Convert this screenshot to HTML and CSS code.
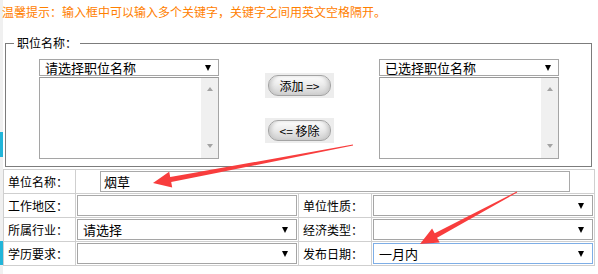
FILE: index.html
```html
<!DOCTYPE html>
<html lang="zh-CN">
<head>
  <meta charset="UTF-8">
  <meta name="viewport" content="width=device-width, initial-scale=1.0">
  <title>职位搜索</title>
  <link rel="stylesheet" href="styles.css">
</head>
<body>
  <p class="tip">温馨提示：输入框中可以输入多个关键字，关键字之间用英文空格隔开。</p>

  <fieldset class="job-box">
    <legend>职位名称：</legend>
    <div class="picker">
      <div class="pick-col">
        <div class="select"><span>请选择职位名称</span><i class="caret"></i></div>
        <div class="listbox">
          <div class="scroll"><i class="up"></i><i class="down"></i></div>
        </div>
      </div>
      <div class="pick-btns">
        <div class="btn-wrap"><button type="button">添加 =&gt;</button></div>
        <div class="btn-wrap"><button type="button">&lt;= 移除</button></div>
      </div>
      <div class="pick-col right">
        <div class="select"><span>已选择职位名称</span><i class="caret"></i></div>
        <div class="listbox">
          <div class="scroll"><i class="up"></i><i class="down"></i></div>
        </div>
      </div>
    </div>
  </fieldset>

  <table class="form">
    <colgroup>
      <col class="c-label"><col class="c-field"><col class="c-label2"><col class="c-field2">
    </colgroup>
    <tr>
      <td class="label">单位名称：</td>
      <td colspan="3" class="name-cell"><input type="text" class="text wide" value="烟草"></td>
    </tr>
    <tr>
      <td class="label">工作地区：</td>
      <td><input type="text" class="text"></td>
      <td class="label">单位性质：</td>
      <td><div class="select big"><span></span><i class="caret"></i></div></td>
    </tr>
    <tr>
      <td class="label">所属行业：</td>
      <td><div class="select big"><span>请选择</span><i class="caret"></i></div></td>
      <td class="label">经济类型：</td>
      <td><div class="select big"><span></span><i class="caret"></i></div></td>
    </tr>
    <tr>
      <td class="label">学历要求：</td>
      <td><div class="select big"><span></span><i class="caret"></i></div></td>
      <td class="label">发布日期：</td>
      <td><div class="select big focus"><span>一月内</span><i class="caret"></i></div></td>
    </tr>
  </table>

  <!-- annotation arrows -->
  <svg class="marks" width="598" height="274" viewBox="0 0 598 274">
    <polygon fill="#f83d3d" points="352.9,144.5 170.2,177.1 169.2,171.7 153,183 172.2,187.5 171.2,182.1 353.1,145.5"/>
    <polygon fill="#f83d3d" points="516.8,191.6 434.7,233.3 432.1,228.5 420,244 439.7,242.5 437.1,237.7 517.2,192.4"/>
  </svg>
</body>
</html>
```

FILE: styles.css
```css
* { margin: 0; padding: 0; box-sizing: border-box; }
body {
  width: 598px;
  height: 274px;
  position: relative;
  overflow: hidden;
  font-family: "Noto Sans CJK SC", "DejaVu Sans", sans-serif;
  font-size: 12px;
  color: #000;
  background:
    linear-gradient(#22b5d9, #22b5d9) 0 132px / 3px 25px no-repeat,
    linear-gradient(#22b5d9, #22b5d9) 0 241px / 3px 24px no-repeat,
    linear-gradient(#f0f0f0, #f0f0f0) 0 0 / 3px 100% no-repeat,
    #fff;
}
.tip {
  margin-top: 4px;
  padding-left: 2px;
  line-height: 16px;
  color: #ff8000;
  white-space: nowrap;
}

/* 职位名称 */
.job-box {
  margin: 16px 6px 0 5px;
  border: 1px solid #7c7c7c;
  padding: 0;
}
.job-box legend {
  margin-left: 8px;
  padding: 0 3px;
  line-height: 14px;
}
.picker {
  display: flex;
  padding: 9px 0 7px 33px;
}
.pick-col {
  width: 180px;
  display: flex;
  flex-direction: column;
  gap: 1px;
}
.pick-col.right { margin-left: 45px; }
.pick-btns {
  margin-left: 46px;
  padding-top: 14px;
  display: flex;
  flex-direction: column;
  gap: 20px;
}
.btn-wrap {
  background: #ededed;
  padding: 2px 3px;
}
.btn-wrap button {
  display: block;
  width: 63px;
  height: 21px;
  border: 1px solid #a3a3a3;
  border-radius: 10px;
  background: linear-gradient(#fdfdfd 0%, #ececec 45%, #d0d0d0 100%);
  box-shadow: inset 4px 0 4px -2px #c4c4c4, inset -4px 0 4px -2px #c4c4c4;
  font-family: inherit;
  font-size: 12px;
  color: #000;
  cursor: pointer;
}

.select {
  display: flex;
  align-items: center;
  height: 17px;
  border: 1px solid #a5a5a5;
  background: #fff;
  padding-left: 5px;
  font-size: 13px;
  line-height: 15px;
}
.select span { flex: 1; white-space: nowrap; }
.caret {
  width: 0;
  height: 0;
  margin-right: 7px;
  border-left: 3px solid transparent;
  border-right: 3px solid transparent;
  border-top: 6px solid #000;
}
.select.big {
  height: 21px;
  line-height: 19px;
}
.select.big .caret { margin-right: 8px; }
.select.focus { border-color: #7eaee6; }

.listbox {
  height: 82px;
  border: 1px solid #a5a5a5;
  border-top-color: #999;
  background: #fff;
  display: flex;
  justify-content: flex-end;
}
.scroll {
  width: 17px;
  background: #f0f0f0;
  display: flex;
  flex-direction: column;
  justify-content: space-between;
  align-items: center;
  padding: 9px 0 10px;
}
.scroll .up, .scroll .down {
  width: 0;
  height: 0;
  border-left: 3px solid transparent;
  border-right: 3px solid transparent;
}
.scroll .up { border-bottom: 4px solid #a3a3a3; }
.scroll .down { border-top: 4px solid #a3a3a3; }

/* 条件表格 */
.form {
  margin: 2px 0 0 3px;
  width: 591px;
  border-collapse: collapse;
  table-layout: fixed;
}
.c-label { width: 72px; }
.c-field { width: 223px; }
.c-label2 { width: 73px; }
.c-field2 { width: 223px; }
.form td {
  border: 1px solid #cfcfcf;
  padding: 1px;
  height: 24px;
}
.form td.label {
  padding: 0 0 0 4px;
  line-height: 21px;
  white-space: nowrap;
}
.form td.name-cell { padding-left: 24px; }
.text {
  display: block;
  width: 100%;
  height: 21px;
  border: 1px solid #a9a9a9;
  padding: 0 3px;
  font-family: inherit;
  font-size: 13px;
  color: #000;
  outline: none;
}
.text.wide { width: 470px; }

.marks {
  position: absolute;
  left: 0;
  top: 0;
  pointer-events: none;
}
```
